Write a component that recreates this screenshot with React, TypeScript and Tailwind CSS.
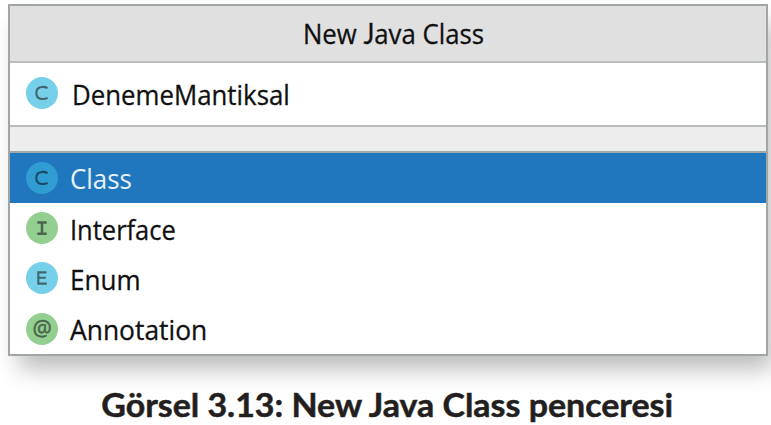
type Kind = { letter: string; label: string; disc: string; ink: string; width: string; selected?: boolean };

const kinds: Kind[] = [
  { letter: "C", label: "Class", disc: "#2f9cd2", ink: "#1c4a66", width: "scale-x-[0.925]", selected: true },
  { letter: "I", label: "Interface", disc: "#94cf92", ink: "#4a6549", width: "scale-x-[0.91]" },
  { letter: "E", label: "Enum", disc: "#76d0e9", ink: "#3f6570", width: "scale-x-[0.93]" },
  { letter: "@", label: "Annotation", disc: "#94cf92", ink: "#4a6549", width: "scale-x-[0.943]" },
];

function Glyph({ letter, ink }: { letter: string; ink: string }) {
  if (letter === "@")
    return (
      <text x="16.2" y="22.6" fontSize="21.5" textAnchor="middle" fill={ink} stroke={ink} strokeWidth="0.4" fontFamily="Noto Sans, sans-serif">
        @
      </text>
    );
  const paths: Record<string, string> = {
    C: "M21.5 11.2C19.8 10.1 17.8 9.7 15.6 10C12 10.4 10.3 12.6 10.3 16C10.3 19.5 12.2 21.7 15.8 22C18 22.2 20 21.8 21.6 20.8",
    I: "M11.3 10.5H20.7M16 10.5V21.7M11.3 21.7H20.7",
    E: "M20.5 10.4H12.3V21.6H20.8M12.3 15.8H19.8",
  };
  return <path d={paths[letter]} fill="none" stroke={ink} strokeWidth={letter === "I" ? 2.5 : 2.1} />;
}

function Icon({ letter, disc, ink }: { letter: string; disc: string; ink: string }) {
  return (
    <svg className="size-8 shrink-0" viewBox="0 0 32 32">
      <circle cx="16" cy="16" r="16" fill={disc} />
      <Glyph letter={letter} ink={ink} />
    </svg>
  );
}

export default function App() {
  return (
    <div className="h-[425px] w-[771px] overflow-hidden bg-white pl-2 pt-1 font-['Open_Sans',sans-serif] text-[28px] leading-none text-[#101010]">
      <div className="flex h-[352px] w-[760px] flex-col border-2 border-[#a0a6a5] bg-white shadow-[8px_16px_22px_-3px_rgba(0,0,0,0.27)]">
        <div className="flex h-[57px] shrink-0 items-center justify-center border-b-2 border-[#b9bebd] bg-[#e0e0e0] pb-[2px] pl-[11px]">
          <span className="scale-x-[0.92] whitespace-nowrap [-webkit-text-stroke:0.3px_#101010]">
            New <span className="font-['Lato',sans-serif]">J</span>ava Class
          </span>
        </div>
        <div className="flex h-16 shrink-0 items-center border-b-2 border-[#b9bebd] pb-[2px] pl-4">
          <Icon letter="C" disc="#76d0e9" ink="#3f6570" />
          <span className="ml-3.5 origin-left scale-x-[0.922] whitespace-nowrap pt-0.5 [-webkit-text-stroke:0.3px_#101010]">DenemeMantiksal</span>
        </div>
        <div className="h-[26px] shrink-0 border-b-2 border-[#9fa9ac] bg-[#ededed]" />
        {kinds.map((k) => (
          <div
            key={k.label}
            className={`flex h-[50.2px] shrink-0 items-center pl-4 ${k.selected ? "bg-[#2177be] text-[#e8f1f8]" : "[-webkit-text-stroke:0.3px_#101010]"}`}
          >
            <Icon letter={k.letter} disc={k.disc} ink={k.ink} />
            <span className={`ml-3 origin-left whitespace-nowrap ${k.selected ? "" : "pt-px"} ${k.width}`}>{k.label}</span>
          </div>
        ))}
      </div>
      <div className="mt-8 flex justify-center pr-[4px] font-['Lato',sans-serif] text-[33px] font-bold text-[#231f20]">
        <span className="scale-x-[1.028] whitespace-nowrap [-webkit-text-stroke:0.5px_#231f20]">
          Görsel 3.13: New Java Class penceresi
        </span>
      </div>
    </div>
  );
}
